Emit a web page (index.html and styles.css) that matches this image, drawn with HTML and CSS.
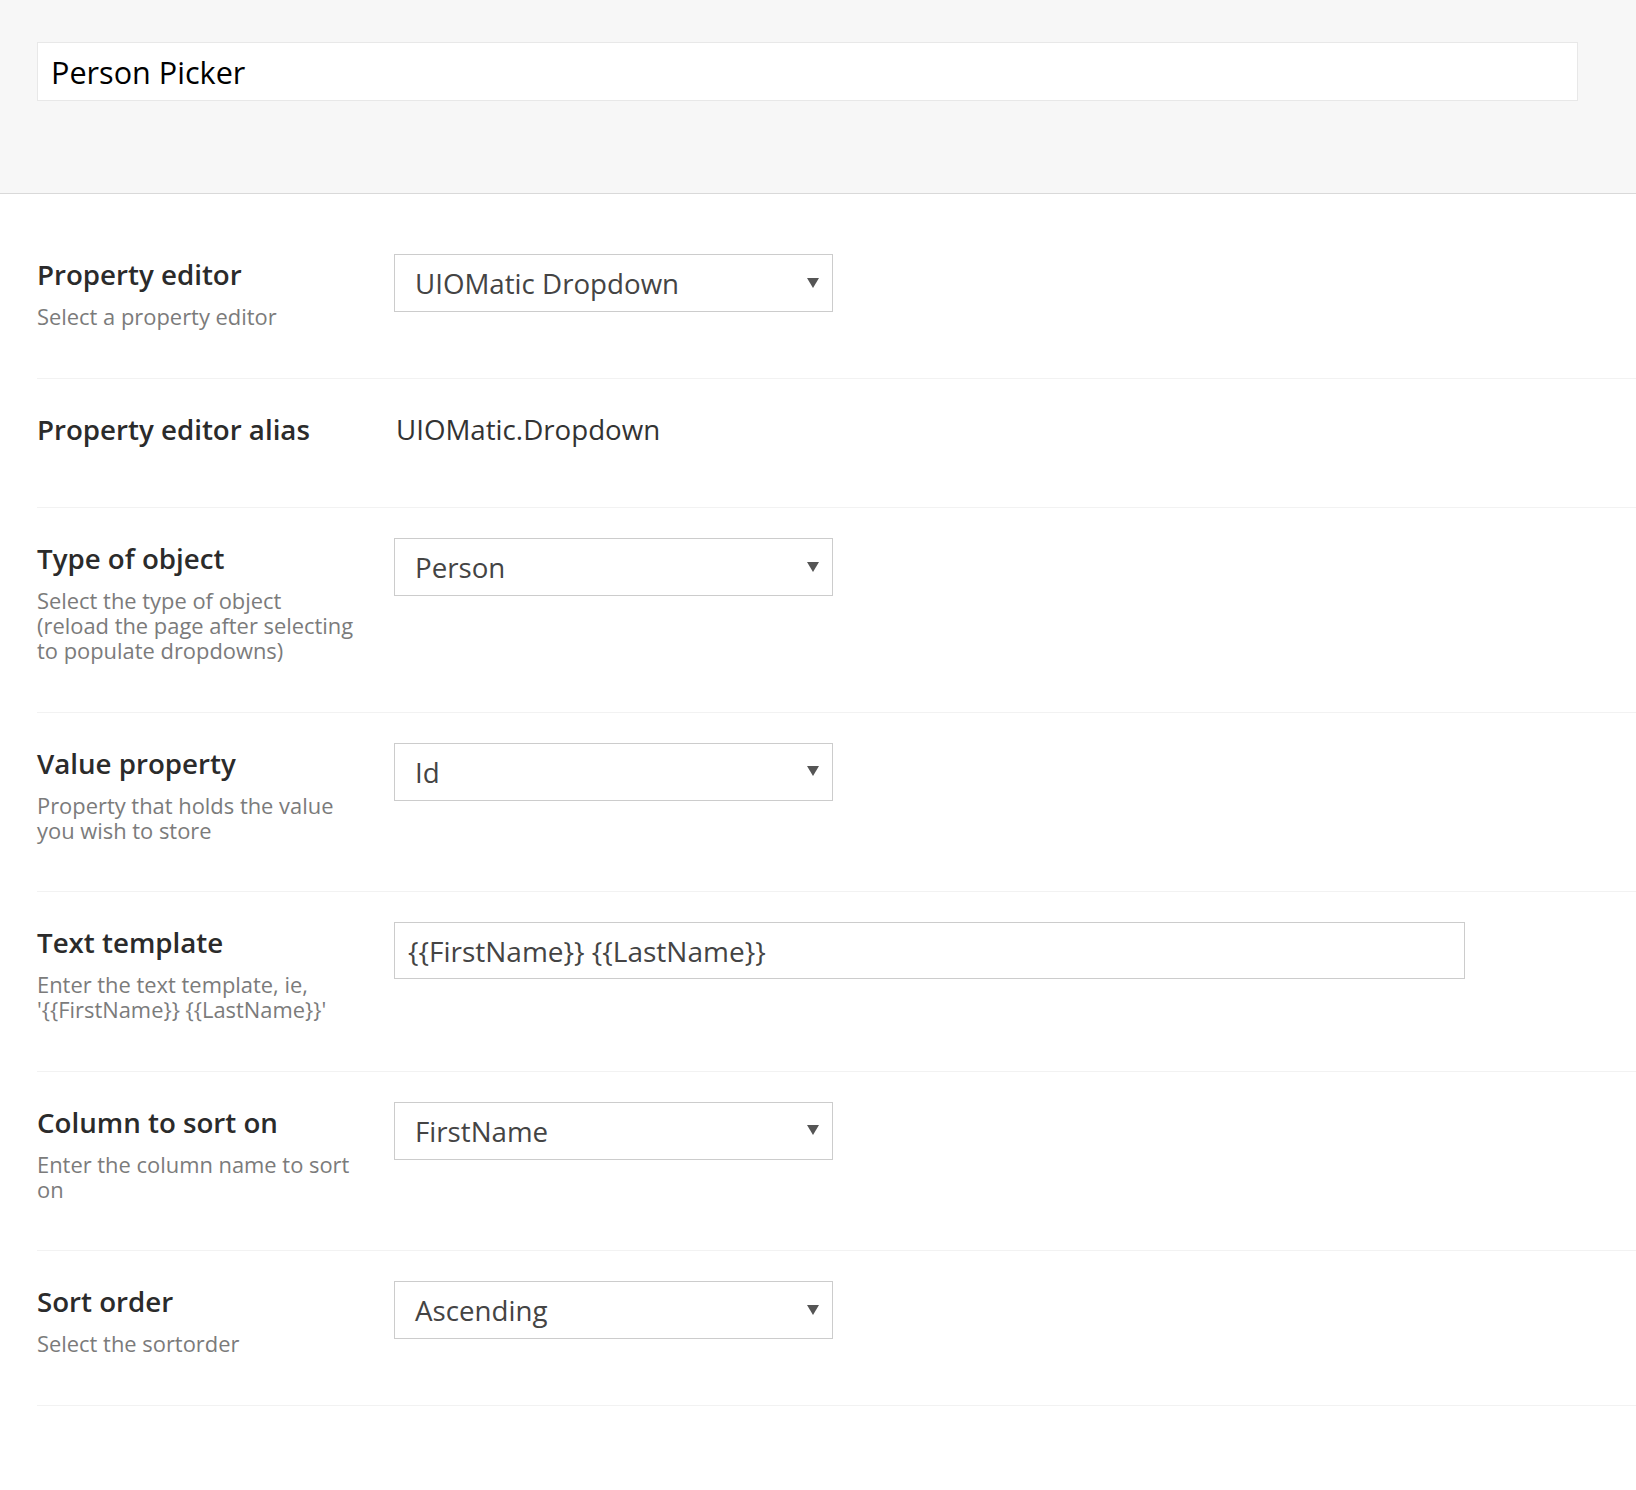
FILE: index.html
```html
<!DOCTYPE html>
<html lang="en">
<head>
<meta charset="utf-8">
<title>Person Picker</title>
<link rel="stylesheet" href="styles.css">
</head>
<body>
<header class="header">
  <div class="title-input">Person Picker</div>
</header>
<main class="content">
  <div class="row">
    <div class="label-col">
      <div class="label">Property editor</div>
      <div class="desc">Select a property editor</div>
    </div>
    <div class="field">
      <div class="select"><span>UIOMatic Dropdown</span><svg class="caret" width="12" height="10" viewBox="0 0 12 10"><path d="M0 0H12L6 10Z" fill="#555"/></svg></div>
    </div>
  </div>
  <div class="row">
    <div class="label-col">
      <div class="label">Property editor alias</div>
      <div class="desc"></div>
    </div>
    <div class="field">
      <div class="value">UIOMatic.Dropdown</div>
    </div>
  </div>
  <div class="row">
    <div class="label-col">
      <div class="label">Type of object</div>
      <div class="desc">Select the type of object (reload the page after selecting to populate dropdowns)</div>
    </div>
    <div class="field">
      <div class="select"><span>Person</span><svg class="caret" width="12" height="10" viewBox="0 0 12 10"><path d="M0 0H12L6 10Z" fill="#555"/></svg></div>
    </div>
  </div>
  <div class="row">
    <div class="label-col">
      <div class="label">Value property</div>
      <div class="desc">Property that holds the value you wish to store</div>
    </div>
    <div class="field">
      <div class="select"><span>Id</span><svg class="caret" width="12" height="10" viewBox="0 0 12 10"><path d="M0 0H12L6 10Z" fill="#555"/></svg></div>
    </div>
  </div>
  <div class="row">
    <div class="label-col">
      <div class="label">Text template</div>
      <div class="desc">Enter the text template, ie, '{{FirstName}} {{LastName}}'</div>
    </div>
    <div class="field">
      <div class="text-input">{{FirstName}} {{LastName}}</div>
    </div>
  </div>
  <div class="row">
    <div class="label-col">
      <div class="label">Column to sort on</div>
      <div class="desc">Enter the column name to sort on</div>
    </div>
    <div class="field">
      <div class="select"><span>FirstName</span><svg class="caret" width="12" height="10" viewBox="0 0 12 10"><path d="M0 0H12L6 10Z" fill="#555"/></svg></div>
    </div>
  </div>
  <div class="row">
    <div class="label-col">
      <div class="label">Sort order</div>
      <div class="desc">Select the sortorder</div>
    </div>
    <div class="field">
      <div class="select"><span>Ascending</span><svg class="caret" width="12" height="10" viewBox="0 0 12 10"><path d="M0 0H12L6 10Z" fill="#555"/></svg></div>
    </div>
  </div>
</main>
</body>
</html>
```

FILE: styles.css
```css
* {
  box-sizing: border-box;
}

html, body {
  margin: 0;
  padding: 0;
  background: #ffffff;
}

body {
  font-family: "Open Sans", "Noto Sans", "Liberation Sans", sans-serif;
  color: #333333;
}

.header {
  background: #f7f7f7;
  border-bottom: 1px solid #d9d9d9;
  height: 194px;
  padding: 42px 58px 0 37px;
}

.title-input {
  height: 59px;
  background: #ffffff;
  border: 1px solid #e8e8e8;
  padding: 0 13px;
  display: flex;
  align-items: center;
  font-size: 30.6px;
  font-weight: 400;
  color: #000000;
}

.content {
  padding: 30px 0 0 37px;
}

.row {
  display: flex;
  align-items: flex-start;
  padding: 30px 0 48.5px;
  border-bottom: 1px solid #f2f2f2;
}

.label-col {
  width: 357px;
  flex: 0 0 357px;
  padding-right: 20px;
}

.label {
  font-size: 27.7px;
  line-height: 40px;
  font-weight: 600;
  color: #2b2b2b;
  white-space: nowrap;
}

.desc {
  margin-top: 10px;
  max-width: 318px;
  font-size: 21.9px;
  line-height: 25px;
  color: #7b7b7b;
}

.field {
  flex: 1;
}

.select {
  width: 439px;
  height: 58px;
  border: 1px solid #cccccc;
  background: #ffffff;
  padding: 0 13px 0 20px;
  display: flex;
  align-items: center;
  justify-content: space-between;
  font-size: 27.7px;
  color: #444444;
}

.caret {
  display: block;
  margin-top: -1px;
}

.value {
  font-size: 27.7px;
  line-height: 40px;
  color: #333333;
  padding-left: 2px;
}

.text-input {
  width: 1071px;
  height: 57px;
  border: 1px solid #cccccc;
  background: #ffffff;
  padding: 0 13px;
  display: flex;
  align-items: center;
  font-size: 28px;
  color: #444444;
}
```
